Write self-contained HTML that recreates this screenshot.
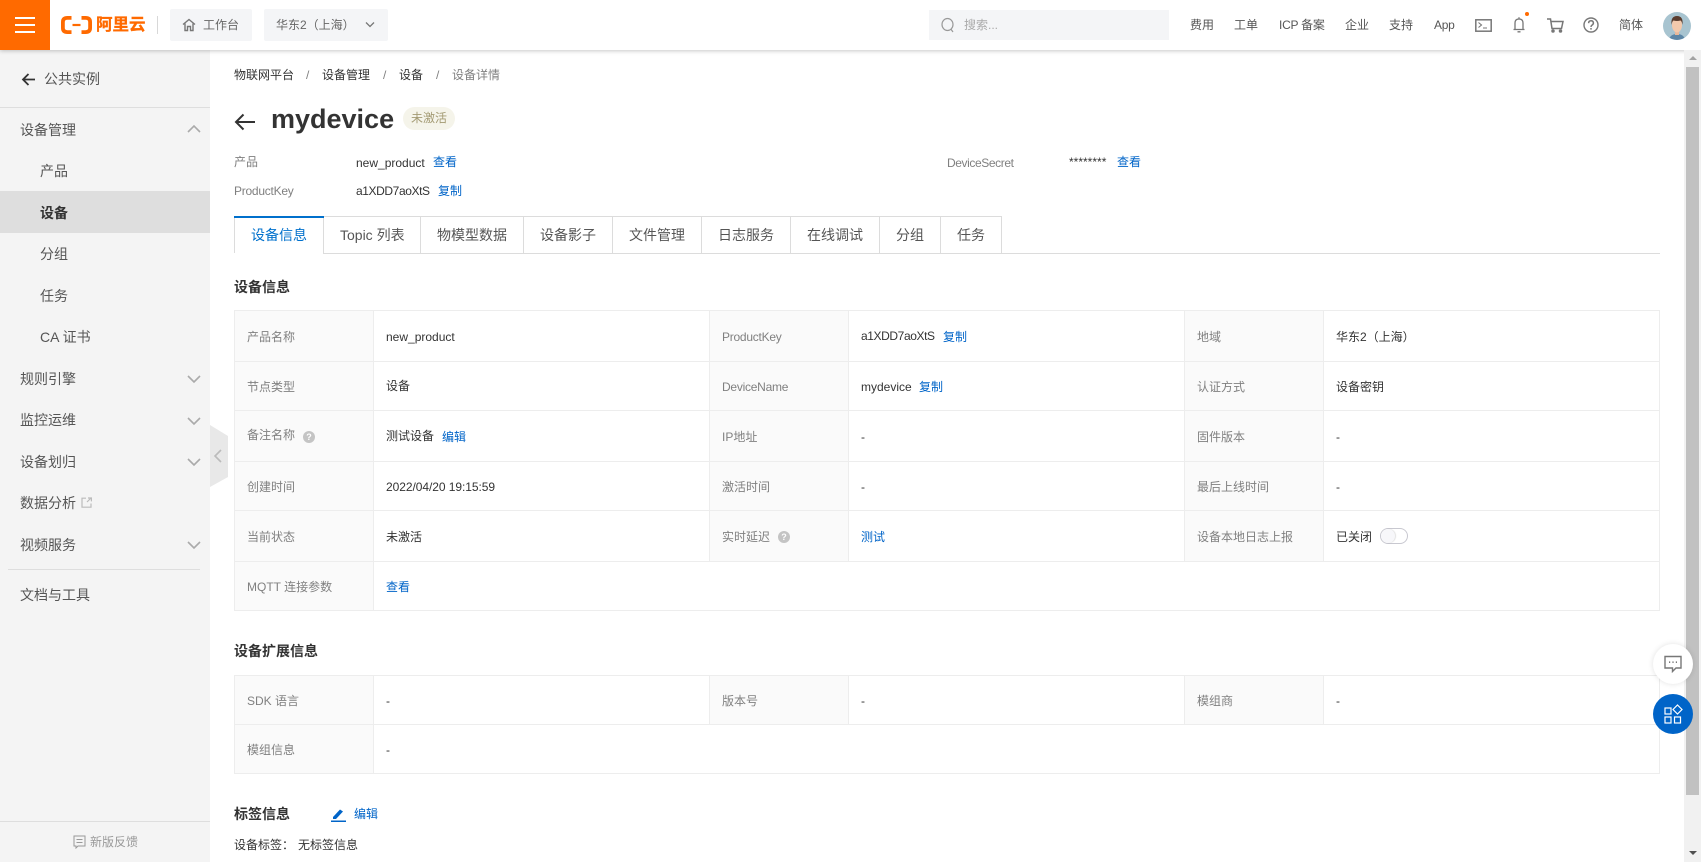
<!DOCTYPE html>
<html lang="zh-CN">
<head>
<meta charset="utf-8">
<title>设备详情</title>
<style>
html,body{margin:0;padding:0;width:1701px;height:862px;overflow:hidden;background:#fff}
body{position:relative;font-family:"Liberation Sans","Noto Sans CJK SC",sans-serif;font-size:12px;color:#333}
.a{position:absolute}
.t{position:absolute;white-space:nowrap;line-height:20px;height:20px}
.s{font-size:14px;color:#555}
.n{font-size:12px;color:#555}
.l{color:#808080}
.v{color:#333}
.b{color:#0064c8}
.h{font-size:14px;font-weight:bold;color:#333}
.hl{position:absolute;background:#ededed;height:1px}
.vl{position:absolute;background:#ededed;width:1px}
.tv{position:absolute;background:#dcdcdc;width:1px;height:37px;top:216px}
.lb{position:absolute;background:#fafafa}
.k{letter-spacing:-.4px}
.q{letter-spacing:-.25px}
svg{position:absolute;display:block}
</style>
</head>
<body>

<!-- sidebar -->
<div class="a" style="left:0;top:50px;width:210px;height:812px;background:#f4f4f4"></div>
<div class="a" style="left:0;top:107px;width:210px;height:1px;background:#dedede"></div>
<div class="a" style="left:0;top:191px;width:210px;height:42px;background:#dedede"></div>
<div class="a" style="left:8px;top:569px;width:192px;height:1px;background:#dedede"></div>
<div class="a" style="left:0;top:821px;width:210px;height:1px;background:#dedede"></div>

<svg style="left:21px;top:72px" width="15" height="15" viewBox="0 0 15 15" fill="none" stroke="#333" stroke-width="1.8"><path d="M14 7.500H2M7.500 2 2 7.500 7.500 13"/></svg>
<span class="t s" style="left:44px;top:69px">公共实例</span>
<span class="t s" style="left:20px;top:120px">设备管理</span>
<span class="t s" style="left:40px;top:161px">产品</span>
<span class="t s" style="left:40px;top:203px;font-weight:bold;color:#333">设备</span>
<span class="t s" style="left:40px;top:244px">分组</span>
<span class="t s" style="left:40px;top:286px">任务</span>
<span class="t s" style="left:40px;top:327px">CA 证书</span>
<span class="t s" style="left:20px;top:369px">规则引擎</span>
<span class="t s" style="left:20px;top:410px">监控运维</span>
<span class="t s" style="left:20px;top:452px">设备划归</span>
<span class="t s" style="left:20px;top:493px">数据分析</span>
<span class="t s" style="left:20px;top:535px">视频服务</span>
<span class="t s" style="left:20px;top:585px">文档与工具</span>

<svg style="left:187px;top:124px" width="14" height="10" viewBox="0 0 14 10" fill="none" stroke="#aaa" stroke-width="1.6"><path d="M1 8 7 2l6 6"/></svg>
<svg style="left:187px;top:374px" width="14" height="10" viewBox="0 0 14 10" fill="none" stroke="#aaa" stroke-width="1.6"><path d="M1 2l6 6 6-6"/></svg>
<svg style="left:187px;top:416px" width="14" height="10" viewBox="0 0 14 10" fill="none" stroke="#aaa" stroke-width="1.6"><path d="M1 2l6 6 6-6"/></svg>
<svg style="left:187px;top:457px" width="14" height="10" viewBox="0 0 14 10" fill="none" stroke="#aaa" stroke-width="1.6"><path d="M1 2l6 6 6-6"/></svg>
<svg style="left:187px;top:540px" width="14" height="10" viewBox="0 0 14 10" fill="none" stroke="#aaa" stroke-width="1.6"><path d="M1 2l6 6 6-6"/></svg>
<svg style="left:81px;top:497px" width="11" height="11" viewBox="0 0 11 11" fill="none" stroke="#bbb" stroke-width="1.2"><path d="M5 1.200H1v9h9V6.500M6 5l4-4M7 1h3.400v3.400"/></svg>

<svg style="left:73px;top:835px" width="13" height="14" viewBox="0 0 13 14" fill="none" stroke="#999" stroke-width="1"><path d="M1 1h11v10H5l-2 2v-2H1zM3.500 4.500h6M3.500 7.500h6"/></svg>
<span class="t" style="left:90px;top:832px;color:#999">新版反馈</span>

<svg style="left:210px;top:425px" width="18" height="62" viewBox="0 0 18 62"><path d="M0 0 18 11V52L0 62z" fill="#e8e8e8"/><path d="M11 25 5 31l6 6" fill="none" stroke="#bbb" stroke-width="1.6"/></svg>

<!-- header -->
<div class="a" style="left:0;top:0;width:1701px;height:50px;background:#fff;box-shadow:0 1px 4px rgba(0,0,0,.22)"></div>
<div class="a" style="left:0;top:0;width:50px;height:50px;background:#ff6a00"></div>
<div class="a" style="left:15px;top:17px;width:20px;height:2px;background:#fff"></div>
<div class="a" style="left:15px;top:24px;width:20px;height:2px;background:#fff"></div>
<div class="a" style="left:15px;top:31px;width:20px;height:2px;background:#fff"></div>

<svg style="left:61px;top:16px" width="31" height="18" viewBox="0 0 31 18" fill="none" stroke="#ff6a00" stroke-width="3.800"><path d="M10.500 1.900H6.500Q1.900 1.900 1.900 6V12Q1.900 16.100 6.500 16.100H10.500M20.500 1.900H24.500Q29.100 1.900 29.100 6V12Q29.100 16.100 24.500 16.100H20.500"/><path d="M11.500 9H19.500" stroke-width="2.200"/></svg>
<span class="t" style="left:96px;top:15px;font-size:16.500px;font-weight:bold;color:#ff6a00;-webkit-text-stroke:.3px #ff6a00">阿里云</span>
<div class="a" style="left:157px;top:16px;width:1px;height:18px;background:#d8d8d8"></div>

<div class="a" style="left:170px;top:9px;width:82px;height:32px;background:#f4f5f7;border-radius:2px"></div>
<svg style="left:182px;top:18px" width="14" height="14" viewBox="0 0 14 14" fill="none" stroke="#777" stroke-width="1.400"><path d="M1 6.500 7 1.500l6 5M3 5.500V12.500H5.500V8.500H8.500V12.500H11V5.500"/></svg>
<span class="t n" style="left:203px;top:15px;color:#666">工作台</span>
<div class="a" style="left:264px;top:9px;width:124px;height:32px;background:#f4f5f7;border-radius:2px"></div>
<span class="t n" style="left:276px;top:15px;color:#666">华东2（上海）</span>
<svg style="left:365px;top:21px" width="10" height="8" viewBox="0 0 10 8" fill="none" stroke="#777" stroke-width="1.300"><path d="M1 1.500 5 5.500l4-4"/></svg>

<div class="a" style="left:929px;top:10px;width:240px;height:30px;background:#f4f5f7"></div>
<svg style="left:941px;top:17px" width="13" height="16" viewBox="0 0 13 16" fill="none" stroke="#999" stroke-width="1.200"><ellipse cx="6.500" cy="7.500" rx="5.500" ry="6"/><path d="M9.800 12 12 15"/></svg>
<span class="t n" style="left:964px;top:15px;color:#aaa">搜索...</span>

<span class="t n" style="left:1190px;top:15px">费用</span>
<span class="t n" style="left:1234px;top:15px">工单</span>
<span class="t n q" style="left:1279px;top:15px">ICP 备案</span>
<span class="t n" style="left:1345px;top:15px">企业</span>
<span class="t n" style="left:1389px;top:15px">支持</span>
<span class="t n q" style="left:1434px;top:15px">App</span>

<svg style="left:1475px;top:19px" width="17" height="13" viewBox="0 0 17 13" fill="none" stroke="#777" stroke-width="1.500"><rect x=".8" y=".8" width="15.400" height="11.400"/><path d="M3.500 3.500 6.500 6 3.500 8.500M8 9H12" stroke-width="1.100"/></svg>
<svg style="left:1512px;top:16px" width="14" height="17" viewBox="0 0 14 17" fill="none" stroke="#777" stroke-width="1.300"><path d="M1.500 13.500H12.500M3 13.500V7Q3 3 7 3T11 7V13.500M7 3V1.200M5.500 15.800H8.500"/></svg>
<div class="a" style="left:1525px;top:12px;width:4px;height:4px;border-radius:50%;background:#ff6a00"></div>
<svg style="left:1547px;top:18px" width="17" height="15" viewBox="0 0 17 15" fill="none" stroke="#777" stroke-width="1.500"><path d="M0 1H3.500L5 10.500H14.500L16 3.500H4"/><circle cx="6" cy="13" r="1" fill="#777"/><circle cx="13.500" cy="13" r="1" fill="#777"/></svg>
<svg style="left:1583px;top:17px" width="16" height="16" viewBox="0 0 16 16" fill="none" stroke="#777" stroke-width="1.400"><circle cx="8" cy="8" r="7"/><path d="M5.600 6.200Q5.700 3.800 8 3.800T10.400 6Q10.400 7.300 9 8.100 8 8.700 8 10" stroke-width="1.500"/><path d="M8 11V12.600" stroke-width="1.500"/></svg>
<span class="t n" style="left:1619px;top:15px">简体</span>
<svg style="left:1663px;top:12px" width="28" height="28" viewBox="0 0 28 28"><clipPath id="c"><circle cx="14" cy="14" r="14"/></clipPath><g clip-path="url(#c)"><rect width="28" height="28" fill="#a8c4d0"/><path d="M6 28Q7 22 14 22T22 28z" fill="#5d86a6"/><rect x="12" y="18" width="4" height="5" fill="#e8b89a"/><ellipse cx="14" cy="13" rx="5" ry="7.500" fill="#f2c9ac"/><path d="M8.500 13Q7.500 4 14 4T19.500 13Q19 9.500 17.500 8.500 14 9.500 10.500 8.500 9 9.500 8.500 13z" fill="#5a3d2f"/></g></svg>

<!-- scrollbar -->
<div class="a" style="left:1684px;top:50px;width:17px;height:812px;background:#f1f1f1"></div>
<div class="a" style="left:1686px;top:67px;width:13px;height:728px;background:#c1c1c1"></div>
<div class="a" style="left:1689px;top:56px;width:0;height:0;border-left:4px solid transparent;border-right:4px solid transparent;border-bottom:4px solid #a3a3a3"></div>
<div class="a" style="left:1689px;top:851px;width:0;height:0;border-left:4px solid transparent;border-right:4px solid transparent;border-top:4px solid #505050"></div>

<!-- breadcrumb -->
<span class="t" style="left:234px;top:65px">物联网平台</span>
<span class="t l" style="left:306px;top:65px">/</span>
<span class="t" style="left:322px;top:65px">设备管理</span>
<span class="t l" style="left:383px;top:65px">/</span>
<span class="t" style="left:399px;top:65px">设备</span>
<span class="t l" style="left:436px;top:65px">/</span>
<span class="t l" style="left:452px;top:65px">设备详情</span>

<!-- title -->
<svg style="left:234px;top:112px" width="21" height="20" viewBox="0 0 21 20" fill="none" stroke="#333" stroke-width="2"><path d="M21 10H2M9.500 2.500 2 10l7.500 7.500"/></svg>
<span class="t" style="left:271px;top:104px;height:30px;line-height:30px;font-size:27px;font-weight:bold;color:#333">mydevice</span>
<div class="a" style="left:403px;top:107px;width:52px;height:23px;border-radius:12px;background:#f5f4ea"></div>
<span class="t" style="left:411px;top:108px;color:#a39a73">未激活</span>

<span class="t l" style="left:234px;top:152px">产品</span>
<span class="t v" style="left:356px;top:153px">new_product</span>
<span class="t b" style="left:433px;top:152px">查看</span>
<span class="t l q" style="left:234px;top:181px">ProductKey</span>
<span class="t v k" style="left:356px;top:181px">a1XDD7aoXtS</span>
<span class="t b" style="left:438px;top:181px">复制</span>
<span class="t l k" style="left:947px;top:153px">DeviceSecret</span>
<span class="t v" style="left:1069px;top:152px">********</span>
<span class="t b" style="left:1117px;top:152px">查看</span>

<!-- tabs -->
<div class="a" style="left:234px;top:216px;width:768px;height:1px;background:#dcdcdc"></div>
<div class="a" style="left:324px;top:253px;width:1336px;height:1px;background:#dcdcdc"></div>
<div class="a" style="left:234px;top:216px;width:1px;height:37px;background:#dcdcdc"></div>
<div class="a" style="left:323px;top:216px;width:1px;height:38px;background:#dcdcdc"></div>
<div class="tv" style="left:420px"></div>
<div class="tv" style="left:523px"></div>
<div class="tv" style="left:612px"></div>
<div class="tv" style="left:701px"></div>
<div class="tv" style="left:790px"></div>
<div class="tv" style="left:879px"></div>
<div class="tv" style="left:940px"></div>
<div class="tv" style="left:1001px"></div>
<div class="a" style="left:234px;top:216px;width:90px;height:2px;background:#0070cc"></div>
<span class="t s" style="left:251px;top:225px;color:#0070cc">设备信息</span>
<span class="t s" style="left:340px;top:225px">Topic 列表</span>
<span class="t s" style="left:437px;top:225px">物模型数据</span>
<span class="t s" style="left:540px;top:225px">设备影子</span>
<span class="t s" style="left:629px;top:225px">文件管理</span>
<span class="t s" style="left:718px;top:225px">日志服务</span>
<span class="t s" style="left:807px;top:225px">在线调试</span>
<span class="t s" style="left:896px;top:225px">分组</span>
<span class="t s" style="left:957px;top:225px">任务</span>

<span class="t h" style="left:234px;top:277px">设备信息</span>

<!-- table 1 -->
<div class="lb" style="left:234px;top:310px;width:140px;height:301px"></div>
<div class="lb" style="left:709px;top:310px;width:140px;height:251px"></div>
<div class="lb" style="left:1184px;top:310px;width:139px;height:251px"></div>
<div class="hl" style="left:234px;top:310px;width:1426px"></div>
<div class="hl" style="left:234px;top:361px;width:1426px"></div>
<div class="hl" style="left:234px;top:410px;width:1426px"></div>
<div class="hl" style="left:234px;top:461px;width:1426px"></div>
<div class="hl" style="left:234px;top:510px;width:1426px"></div>
<div class="hl" style="left:234px;top:561px;width:1426px"></div>
<div class="hl" style="left:234px;top:610px;width:1426px"></div>
<div class="vl" style="left:234px;top:310px;height:300px"></div>
<div class="vl" style="left:373px;top:310px;height:300px"></div>
<div class="vl" style="left:709px;top:310px;height:251px"></div>
<div class="vl" style="left:848px;top:310px;height:251px"></div>
<div class="vl" style="left:1184px;top:310px;height:251px"></div>
<div class="vl" style="left:1323px;top:310px;height:251px"></div>
<div class="vl" style="left:1659px;top:310px;height:301px"></div>

<span class="t l" style="left:247px;top:327px">产品名称</span>
<span class="t v" style="left:386px;top:327px">new_product</span>
<span class="t l q" style="left:722px;top:327px">ProductKey</span>
<span class="t v k" style="left:861px;top:326px">a1XDD7aoXtS</span>
<span class="t b" style="left:943px;top:327px">复制</span>
<span class="t l" style="left:1197px;top:327px">地域</span>
<span class="t v" style="left:1336px;top:327px">华东2（上海）</span>

<span class="t l" style="left:247px;top:377px">节点类型</span>
<span class="t v" style="left:386px;top:376px">设备</span>
<span class="t l q" style="left:722px;top:377px">DeviceName</span>
<span class="t v" style="left:861px;top:377px">mydevice</span>
<span class="t b" style="left:919px;top:377px">复制</span>
<span class="t l" style="left:1197px;top:377px">认证方式</span>
<span class="t v" style="left:1336px;top:377px">设备密钥</span>

<span class="t l" style="left:247px;top:425px">备注名称</span>
<div class="a" style="left:303px;top:431px;width:12px;height:12px;border-radius:50%;background:#c4c4c4;color:#fff;font-size:9px;font-weight:bold;line-height:12px;text-align:center">?</div>
<span class="t v" style="left:386px;top:426px">测试设备</span>
<span class="t b" style="left:442px;top:427px">编辑</span>
<span class="t l" style="left:722px;top:427px">IP地址</span>
<span class="t v" style="left:861px;top:427px">-</span>
<span class="t l" style="left:1197px;top:427px">固件版本</span>
<span class="t v" style="left:1336px;top:427px">-</span>

<span class="t l" style="left:247px;top:477px">创建时间</span>
<span class="t v q" style="left:386px;top:477px;letter-spacing:-.06px">2022/04/20 19:15:59</span>
<span class="t l" style="left:722px;top:477px">激活时间</span>
<span class="t v" style="left:861px;top:477px">-</span>
<span class="t l" style="left:1197px;top:477px">最后上线时间</span>
<span class="t v" style="left:1336px;top:477px">-</span>

<span class="t l" style="left:247px;top:527px">当前状态</span>
<span class="t v" style="left:386px;top:527px">未激活</span>
<span class="t l" style="left:722px;top:527px">实时延迟</span>
<div class="a" style="left:778px;top:531px;width:12px;height:12px;border-radius:50%;background:#c4c4c4;color:#fff;font-size:9px;font-weight:bold;line-height:12px;text-align:center">?</div>
<span class="t b" style="left:861px;top:527px">测试</span>
<span class="t l" style="left:1197px;top:527px">设备本地日志上报</span>
<span class="t v" style="left:1336px;top:527px">已关闭</span>
<div class="a" style="left:1380px;top:528px;width:26px;height:14px;border:1px solid #c8c8d0;border-radius:8px;background:#fff"></div>
<div class="a" style="left:1381px;top:529px;width:14px;height:14px;border-radius:50%;background:#f7f7fa;box-shadow:1px 0 1px rgba(0,0,0,.12)"></div>

<span class="t l" style="left:247px;top:577px">MQTT 连接参数</span>
<span class="t b" style="left:386px;top:577px">查看</span>

<span class="t h" style="left:234px;top:641px">设备扩展信息</span>

<!-- table 2 -->
<div class="lb" style="left:234px;top:675px;width:140px;height:99px"></div>
<div class="lb" style="left:709px;top:675px;width:140px;height:50px"></div>
<div class="lb" style="left:1184px;top:675px;width:139px;height:50px"></div>
<div class="hl" style="left:234px;top:675px;width:1426px"></div>
<div class="hl" style="left:234px;top:724px;width:1426px"></div>
<div class="hl" style="left:234px;top:773px;width:1426px"></div>
<div class="vl" style="left:234px;top:675px;height:98px"></div>
<div class="vl" style="left:373px;top:675px;height:98px"></div>
<div class="vl" style="left:709px;top:675px;height:49px"></div>
<div class="vl" style="left:848px;top:675px;height:49px"></div>
<div class="vl" style="left:1184px;top:675px;height:49px"></div>
<div class="vl" style="left:1323px;top:675px;height:49px"></div>
<div class="vl" style="left:1659px;top:675px;height:99px"></div>

<span class="t l" style="left:247px;top:691px">SDK 语言</span>
<span class="t v" style="left:386px;top:691px">-</span>
<span class="t l" style="left:722px;top:691px">版本号</span>
<span class="t v" style="left:861px;top:691px">-</span>
<span class="t l" style="left:1197px;top:691px">模组商</span>
<span class="t v" style="left:1336px;top:691px">-</span>
<span class="t l" style="left:247px;top:740px">模组信息</span>
<span class="t v" style="left:386px;top:740px">-</span>

<!-- tags -->
<span class="t h" style="left:234px;top:804px">标签信息</span>
<svg style="left:331px;top:808px" width="15" height="14" viewBox="0 0 15 14"><path d="M2 9 9 1.500 12 3.500 5 11H2z" fill="#0064c8"/><rect y="12.500" width="15" height="1.500" fill="#0064c8"/></svg>
<span class="t b" style="left:354px;top:804px">编辑</span>
<span class="t v" style="left:234px;top:835px">设备标签：</span>
<span class="t v" style="left:298px;top:835px">无标签信息</span>

<!-- floating -->
<div class="a" style="left:1653px;top:644px;width:40px;height:40px;border-radius:50%;background:#fff;box-shadow:0 0 6px rgba(0,0,0,.12)"></div>
<svg style="left:1664px;top:655px" width="18" height="18" viewBox="0 0 18 18" fill="none" stroke="#777" stroke-width="1.400"><path d="M1 1.500H17V13H12L8.500 16.500V13H1z"/><path d="M5 7.200H6.200M8.400 7.200H9.600M11.800 7.200H13" stroke-width="1.600"/></svg>
<div class="a" style="left:1653px;top:694px;width:40px;height:40px;border-radius:50%;background:#0064c8"></div>
<svg style="left:1664px;top:704px" width="19" height="20" viewBox="0 0 19 20" fill="none" stroke="#fff" stroke-width="1.200"><rect x="1" y="4" width="6" height="6"/><rect x="1" y="13" width="6" height="6"/><rect x="10.500" y="13" width="6" height="6"/><path d="M13.500 1 18 5.500 13.500 10 9 5.500z"/></svg>

</body>
</html>
